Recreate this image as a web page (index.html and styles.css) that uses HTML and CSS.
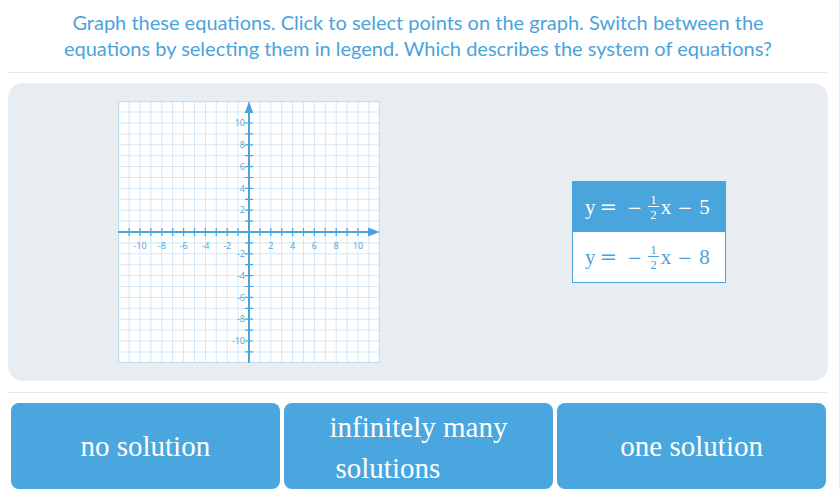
FILE: index.html
```html
<!DOCTYPE html>
<html>
<head>
    <meta charset="UTF-8">
    <meta name="viewport" content="width=device-width, initial-scale=1.0">
    <title>System of equations</title>
    <link rel="stylesheet" href="styles.css">
</head>
<body>
<div class="page">
    <p class="prompt">Graph these equations. Click to select points on the graph. Switch between the<br>equations by selecting them in legend. Which describes the system of equations?</p>
    <div class="rule"></div>
    <div class="board">
        <div class="graph">
            <svg width="262" height="262" viewBox="-131 -131 262 262">
                <rect x="-130.8" y="-130.8" width="261.6" height="261.6" fill="#fff"/>
                <!-- grid: a wide dashed stroke gives evenly spaced lines -->
                <g stroke="#d3e7f6" stroke-dasharray="1 9.9">
                    <line x1="-131.3" y1="0" x2="131" y2="0" stroke-width="261.6"/>
                    <line x1="0" y1="-131.3" x2="0" y2="131" stroke-width="261.6"/>
                </g>
                <rect x="-130.3" y="-130.3" width="260.6" height="260.6" fill="none" stroke="#bcd9ef"/>
                <g stroke="#4aa3dc">
                    <line x1="-130.8" y1="0" x2="121" y2="0" stroke-width="2"/>
                    <line x1="0" y1="-121" x2="0" y2="130.8" stroke-width="2"/>
                    <line x1="-120.5" y1="0" x2="121" y2="0" stroke-width="8" stroke-dasharray="1.2 9.7"/>
                    <line x1="0" y1="-120.5" x2="0" y2="121" stroke-width="8" stroke-dasharray="1.2 9.7"/>
                </g>
                <g fill="#4aa3dc">
                    <polygon points="119,-4.5 130.8,0 119,4.5"/>
                    <polygon points="-4.2,-119 0,-130.8 4.2,-119"/>
                </g>
                <g class="ticks" text-anchor="middle">
                    <text x="-109" y="16.5">-10</text>
                    <text x="-87.2" y="16.5">-8</text>
                    <text x="-65.4" y="16.5">-6</text>
                    <text x="-43.6" y="16.5">-4</text>
                    <text x="-21.8" y="16.5">-2</text>
                    <text x="21.8" y="16.5">2</text>
                    <text x="43.6" y="16.5">4</text>
                    <text x="65.4" y="16.5">6</text>
                    <text x="87.2" y="16.5">8</text>
                    <text x="109" y="16.5">10</text>
                </g>
                <g class="ticks" text-anchor="end">
                    <text x="-4" y="-105.8">10</text>
                    <text x="-4" y="-84">8</text>
                    <text x="-4" y="-62.2">6</text>
                    <text x="-4" y="-40.4">4</text>
                    <text x="-4" y="-18.6">2</text>
                    <text x="-4" y="25">-2</text>
                    <text x="-4" y="46.8">-4</text>
                    <text x="-4" y="68.6">-6</text>
                    <text x="-4" y="90.4">-8</text>
                    <text x="-4" y="112.2">-10</text>
                </g>
            </svg>
        </div>
        <div class="legend">
            <div class="eq active">
                <span class="v">y</span><span class="op eq-sign">=</span><span class="op minus">−</span><span class="frac"><span class="num">1</span><span class="den">2</span></span><span class="x">x</span><span class="op minus2">−</span><span class="c">5</span>
            </div>
            <div class="eq">
                <span class="v">y</span><span class="op eq-sign">=</span><span class="op minus">−</span><span class="frac"><span class="num">1</span><span class="den">2</span></span><span class="x">x</span><span class="op minus2">−</span><span class="c">8</span>
            </div>
        </div>
    </div>
    <div class="rule"></div>
    <div class="choices">
        <button class="choice">no solution</button>
        <button class="choice"><span class="wrap"><span class="line">infinitely many</span><span class="line indent">solutions</span></span></button>
        <button class="choice">one solution</button>
    </div>
</div>
</body>
</html>
```

FILE: styles.css
```css
html {
    border-right: 1px solid #e6ebef;
}
body {
    margin: 0;
    background-color: white;
    font-family: Lato, "Open Sans", sans-serif;
}
.page {
    padding: 0 11px 0 8px;
}
.prompt {
    margin: 9px 0 0;
    text-align: center;
    color: #4aa3dc;
    font-size: 20px;
    line-height: 26px;
}
.rule {
    height: 1px;
    margin: 11px 1px 0;
    background-color: #dfe8ef;
}
.board {
    display: flex;
    align-items: center;
    height: 298px;
    margin-top: 10px;
    padding-left: 110px;
    background-color: #e8edf1;
    border-radius: 15px;
}
.graph svg {
    display: block;
}
.ticks {
    font-family: "Open Sans", sans-serif;
    font-size: 9px;
    fill: #4aa3dc;
}
.legend {
    margin-left: 192px;
    width: 152px;
    border: 1px solid #4aa3dc;
    background-color: white;
}
.eq {
    display: flex;
    align-items: center;
    height: 50px;
    padding-left: 12px;
    color: #4aa3dc;
    font-family: "Liberation Serif", serif;
    font-size: 21px;
}
.eq.active {
    background-color: #4aa5dd;
    color: white;
}
.op {
    font-family: "DejaVu Serif", serif;
    font-size: 18px;
}
.eq-sign {
    margin-left: 4px;
    font-size: 21px;
}
.minus {
    margin-left: 10px;
}
.frac {
    display: inline-flex;
    flex-direction: column;
    align-items: center;
    margin-left: 6px;
    font-size: 13px;
    line-height: 11px;
}
.num {
    padding: 0 2px 1px;
    border-bottom: 1px solid currentColor;
}
.den {
    padding-top: 2px;
}
.x {
    margin-left: 2px;
}
.minus2 {
    margin-left: 6px;
}
.c {
    margin-left: 7px;
}
.choices {
    display: grid;
    grid-template-columns: repeat(3, 1fr);
    gap: 4.5px;
    margin: 10px 2px 0 3px;
}
.choice {
    height: 86px;
    padding: 0;
    border: none;
    border-radius: 8px;
    background-color: #4aa6de;
    color: white;
    font-family: "Liberation Serif", serif;
    font-size: 29px;
    line-height: 41px;
    cursor: pointer;
}
.wrap {
    display: inline-block;
    text-align: left;
    padding-top: 4px;
}
.line {
    display: block;
}
.indent {
    padding-left: 6px;
}
```
